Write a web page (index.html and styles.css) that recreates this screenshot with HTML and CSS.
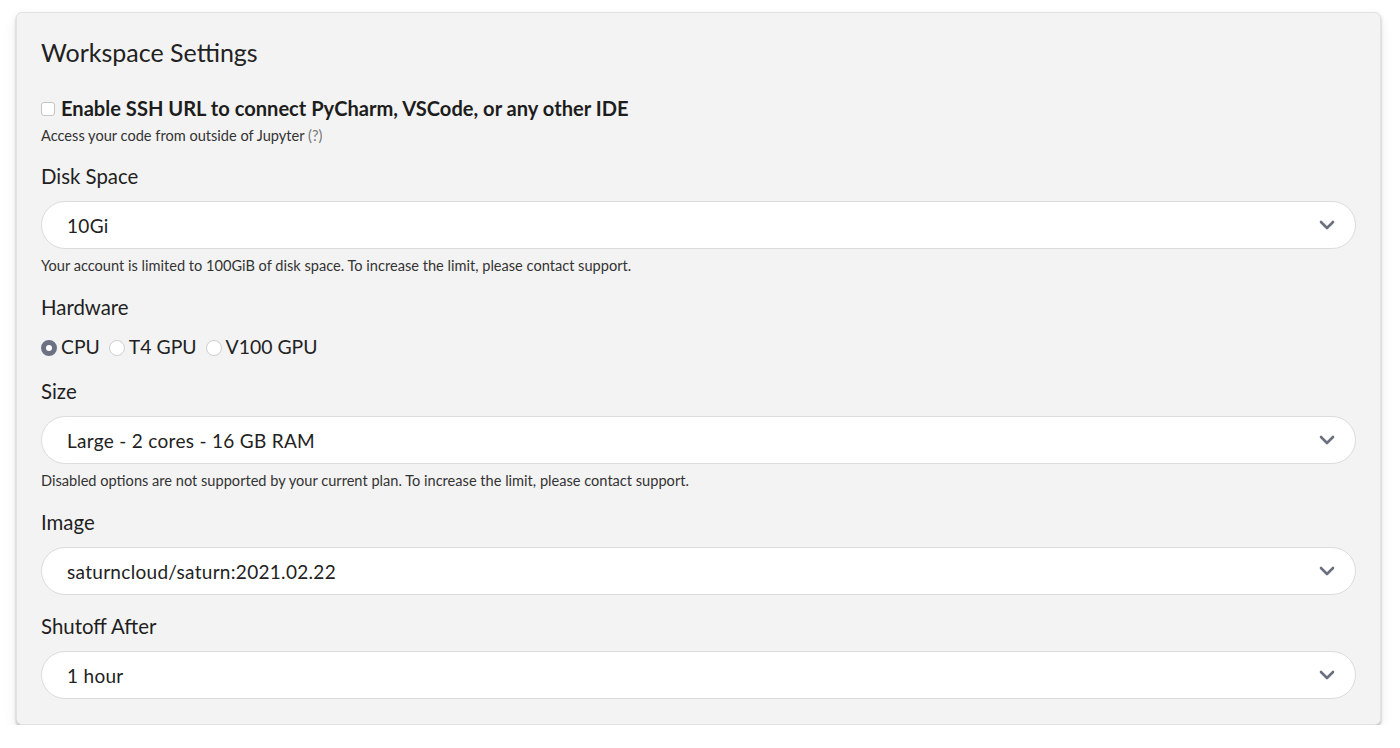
FILE: index.html
```html
<!DOCTYPE html>
<html lang="en">
<head>
<meta charset="utf-8">
<title>Workspace Settings</title>
<link rel="stylesheet" href="styles.css">
</head>
<body>
<div class="card">
  <h2 class="title">Workspace Settings</h2>

  <label class="check-row">
    <span class="checkbox"></span>
    <span class="check-label">Enable SSH URL to connect PyCharm, VSCode, or any other IDE</span>
  </label>
  <p class="hint hint-tight">Access your code from outside of Jupyter <span class="muted">(?)</span></p>

  <div class="field-label field-label-first">Disk Space</div>
  <div class="select"><span>10Gi</span><svg class="chev" viewBox="0 0 16 10" width="16" height="10"><path d="M2 2 L8 8 L14 2" fill="none" stroke="#6b7080" stroke-width="2.6" stroke-linecap="round" stroke-linejoin="round"/></svg></div>
  <p class="hint">Your account is limited to 100GiB of disk space. To increase the limit, please contact support.</p>

  <div class="field-label">Hardware</div>
  <div class="radios">
    <label class="radio-item"><span class="radio checked"></span>CPU</label>
    <label class="radio-item"><span class="radio"></span>T4 GPU</label>
    <label class="radio-item"><span class="radio"></span>V100 GPU</label>
  </div>

  <div class="field-label">Size</div>
  <div class="select"><span>Large - 2 cores - 16 GB RAM</span><svg class="chev" viewBox="0 0 16 10" width="16" height="10"><path d="M2 2 L8 8 L14 2" fill="none" stroke="#6b7080" stroke-width="2.6" stroke-linecap="round" stroke-linejoin="round"/></svg></div>
  <p class="hint">Disabled options are not supported by your current plan. To increase the limit, please contact support.</p>

  <div class="field-label">Image</div>
  <div class="select"><span>saturncloud/saturn:2021.02.22</span><svg class="chev" viewBox="0 0 16 10" width="16" height="10"><path d="M2 2 L8 8 L14 2" fill="none" stroke="#6b7080" stroke-width="2.6" stroke-linecap="round" stroke-linejoin="round"/></svg></div>

  <div class="field-label field-label-after-select">Shutoff After</div>
  <div class="select"><span>1 hour</span><svg class="chev" viewBox="0 0 16 10" width="16" height="10"><path d="M2 2 L8 8 L14 2" fill="none" stroke="#6b7080" stroke-width="2.6" stroke-linecap="round" stroke-linejoin="round"/></svg></div>
</div>
</body>
</html>
```

FILE: styles.css
```css
* { box-sizing: border-box; }
html, body { margin: 0; background: #ffffff; }
body {
  padding: 12px 19px 0 16px;
  font-family: Lato, "Noto Sans", "Liberation Sans", sans-serif;
  color: #222222;
}
.card {
  background: #f3f3f3;
  border: 1px solid #e2e2e2;
  border-radius: 6px;
  box-shadow: 0 2px 3px rgba(0,0,0,0.25), 0 5px 14px rgba(0,0,0,0.07);
  padding: 24px 24px 23px 24px;
  height: 713px;
}
.title {
  margin: 0;
  font-size: 25px;
  font-weight: 400;
  line-height: 30px;
  color: #222;
}
.check-row {
  display: flex;
  align-items: center;
  margin-top: 29px;
  height: 24px;
}
.checkbox {
  width: 14px;
  height: 14px;
  border: 1px solid #c4c4c4;
  border-radius: 3px;
  background: #fff;
  margin-right: 6px;
  margin-top: 2px;
}
.check-label {
  font-size: 20.1px;
  font-weight: 700;
  line-height: 24px;
  color: #1d1d1d;
}
.hint {
  margin: 8px 0 0;
  font-size: 14.6px;
  line-height: 18px;
  color: #333;
}
.hint-tight { margin-top: 7px; }
.muted { color: #777; }
.field-label {
  margin-top: 20px;
  font-size: 20.4px;
  line-height: 24px;
  color: #1f1f1f;
}
.field-label-first { margin-top: 19px; }
.field-label-after-select { margin-top: 19px; }
.select {
  margin-top: 13px;
  height: 48px;
  background: #fff;
  border: 1px solid #dcdcdc;
  border-radius: 25px;
  display: flex;
  align-items: center;
  justify-content: space-between;
  padding: 0 20px 0 25px;
  font-size: 19px;
  letter-spacing: 0.3px;
  color: #222;
}
.chev { display: block; }
.radios {
  display: flex;
  align-items: center;
  margin-top: 16px;
  height: 24px;
}
.radio-item {
  display: flex;
  align-items: center;
  font-size: 19.4px;
  line-height: 24px;
  margin-right: 9px;
  color: #222;
}
.radio {
  width: 16px;
  height: 16px;
  border-radius: 50%;
  border: 1px solid #cfcfcf;
  background: #fff;
  margin-right: 4px;
  margin-top: 1px;
}
.radio.checked {
  border: 5px solid #6c7283;
  background: #fff;
}
```
